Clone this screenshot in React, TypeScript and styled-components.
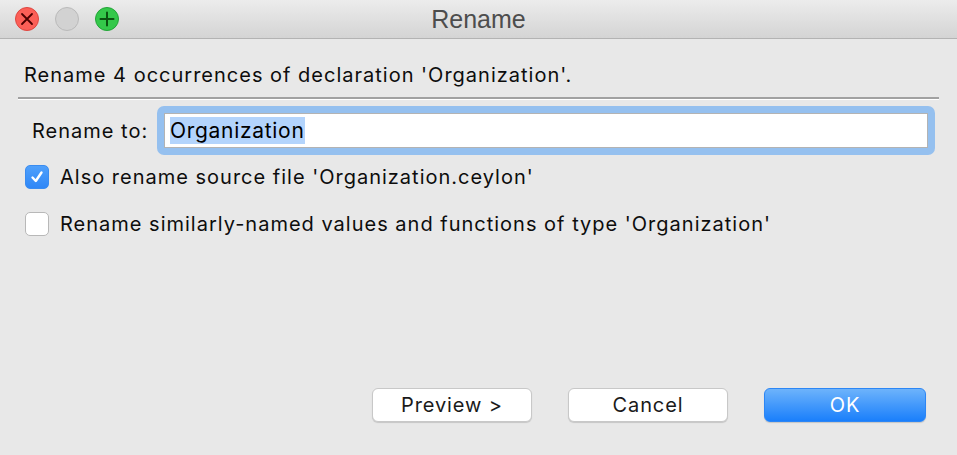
import React from "react";
import styled, { createGlobalStyle } from "styled-components";

const FONT = `Inter, "Liberation Sans", Arial, sans-serif`;

const GlobalStyle = createGlobalStyle`
  html, body {
    margin: 0;
    padding: 0;
    background: #e8e8e8;
  }
  * {
    box-sizing: border-box;
  }
`;

const Window = styled.div`
  width: 957px;
  height: 455px;
  display: flex;
  flex-direction: column;
  background: #e8e8e8;
  font-family: ${FONT};
  font-size: 20px;
  letter-spacing: 1px;
  color: #0d0d0d;
  overflow: hidden;
`;

const TitleBar = styled.div`
  height: 39px;
  flex: none;
  display: flex;
  align-items: center;
  position: relative;
  background: linear-gradient(#ececec, #d4d4d4);
  border-bottom: 1px solid #b3b3b3;
`;

const Lights = styled.div`
  display: flex;
  gap: 16px;
  padding-left: 15px;
`;

const Light = styled.div<{ bg: string; edge: string }>`
  width: 24px;
  height: 24px;
  border-radius: 50%;
  background: ${props => props.bg};
  border: 1px solid ${props => props.edge};
  display: flex;
  align-items: center;
  justify-content: center;
`;

const Title = styled.div`
  position: absolute;
  left: 0;
  right: 0;
  top: 0;
  bottom: 0;
  display: flex;
  align-items: center;
  justify-content: center;
  font-family: "Liberation Sans", Arial, sans-serif;
  font-size: 25px;
  letter-spacing: 0;
  color: #4d4d4d;
  pointer-events: none;
`;

const Body = styled.div`
  flex: 1;
  display: flex;
  flex-direction: column;
`;

const Headline = styled.div`
  height: 58px;
  padding: 24px 0 0 24px;
  line-height: 24px;
`;

const Separator = styled.div`
  margin: 0 18px;
  border-top: 2px solid #a1a1a1;
  border-bottom: 1px solid #ffffff;
`;

const FieldRow = styled.div`
  display: flex;
  align-items: center;
  margin: 6px 22px 0 32px;
`;

const Label = styled.div`
  width: 125px;
`;

const FocusRing = styled.div`
  flex: 1;
  padding: 7px;
  border-radius: 7px;
  background: #95c0ef;
`;

const Input = styled.div`
  height: 35px;
  background: #fff;
  border: 1px solid #b3b3b3;
  display: flex;
  align-items: center;
  padding-left: 5px;
`;

const Selected = styled.span`
  background: #b3d4fc;
  font-size: 21px;
  letter-spacing: 0.7px;
  line-height: 27px;
  color: #000;
`;

const Options = styled.div`
  display: flex;
  flex-direction: column;
  gap: 23px;
  margin: 10px 0 0 25px;
`;

const Option = styled.label`
  display: flex;
  align-items: center;
  gap: 11px;
  height: 24px;
`;

const Box = styled.span<{ checked?: boolean }>`
  flex: none;
  width: 24px;
  height: 24px;
  border-radius: 5px;
  display: flex;
  align-items: center;
  justify-content: center;
  background: ${props => (props.checked ? "linear-gradient(#4fa0fb, #2f87f7)" : "#fff")};
  border: 1px solid ${props => (props.checked ? "#3a8cf0" : "#b8b8b8")};
`;

const Footer = styled.div`
  margin-top: auto;
  display: flex;
  justify-content: flex-end;
  gap: 36px;
  padding: 0 31px 33px 0;
`;

const Button = styled.button<{ primary?: boolean }>`
  width: ${props => (props.primary ? "162px" : "160px")};
  height: 34px;
  border-radius: 6px;
  font-family: ${FONT};
  font-size: 20px;
  letter-spacing: 0.9px;
  color: ${props => (props.primary ? "#fff" : "#1a1a1a")};
  background: ${props => (props.primary ? "linear-gradient(#6db3fb, #1a7ffb)" : "#fff")};
  border: 1px solid ${props => (props.primary ? "#2c86f5" : "#c8c8c8")};
  box-shadow: 0 1px 1px rgba(0, 0, 0, 0.15);
  padding: 0;
`;

const App: React.FC = () => {
  return (
    <>
      <GlobalStyle />
      <Window>
        <TitleBar>
          <Lights>
            <Light bg="#fc5f57" edge="#de4640">
              <svg width="14" height="14" viewBox="0 0 14 14">
                <path d="M2 2 L12 12 M12 2 L2 12" stroke="#4d0000" strokeWidth="1.8" strokeLinecap="round" />
              </svg>
            </Light>
            <Light bg="#d2d2d2" edge="#bababa" />
            <Light bg="#34c84a" edge="#22a437">
              <svg width="16" height="16" viewBox="0 0 16 16">
                <path d="M8 1.5 V14.5 M1.5 8 H14.5" stroke="#0a5210" strokeWidth="2" strokeLinecap="round" />
              </svg>
            </Light>
          </Lights>
          <Title>Rename</Title>
        </TitleBar>
        <Body>
          <Headline>Rename 4 occurrences of declaration 'Organization'.</Headline>
          <Separator />
          <FieldRow>
            <Label>Rename to:</Label>
            <FocusRing>
              <Input>
                <Selected>Organization</Selected>
              </Input>
            </FocusRing>
          </FieldRow>
          <Options>
            <Option>
              <Box checked>
                <svg width="16" height="16" viewBox="0 0 16 16">
                  <path d="M3.5 8.5 L6.8 12 L12.5 3.5" fill="none" stroke="#fff" strokeWidth="2.4" strokeLinecap="round" strokeLinejoin="round" />
                </svg>
              </Box>
              Also rename source file 'Organization.ceylon'
            </Option>
            <Option>
              <Box />
              Rename similarly-named values and functions of type 'Organization'
            </Option>
          </Options>
          <Footer>
            <Button>Preview &gt;</Button>
            <Button>Cancel</Button>
            <Button primary>OK</Button>
          </Footer>
        </Body>
      </Window>
    </>
  );
};

export default App;
